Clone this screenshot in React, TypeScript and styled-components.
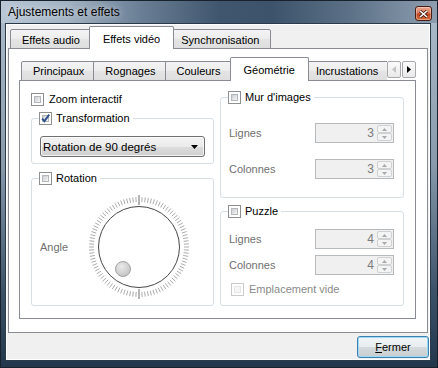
import styled, { createGlobalStyle } from 'styled-components';

const GlobalStyle = createGlobalStyle`
  html, body { margin: 0; padding: 0; }
  body {
    font-family: "Liberation Sans", Arial, sans-serif;
    font-size: 11px;
    color: #000;
    background: #fff;
  }
  *, *::before, *::after { box-sizing: border-box; }
`;

const Window = styled.div`
  width: 438px;
  height: 368px;
  display: flex;
  flex-direction: column;
  border: 1px solid #17222d;
  background: linear-gradient(to bottom, #aebdcc 0%, #8799ab 45%, #3b5168 80%, #22374c 100%);
`;

const TitleBar = styled.div`
  height: 22px;
  flex: none;
  display: flex;
  align-items: flex-start;
  justify-content: space-between;
  padding: 0 5px 0 7px;
  background: linear-gradient(
    to right,
    #b9c7d5 0%,
    #a3b3c3 15%,
    #6a7f95 32%,
    #40566e 50%,
    #3c536b 62%,
    #5c7187 80%,
    #8e9eb0 100%
  );
`;

const Title = styled.span`
  font-size: 12px;
  line-height: 23px;
  text-shadow: 0 0 6px rgba(255, 255, 255, 0.8);
`;

const CloseButton = styled.div`
  width: 17px;
  height: 15px;
  margin-top: 5px;
  display: flex;
  align-items: center;
  justify-content: center;
  border: 1px solid #4a1d12;
  border-radius: 3px;
  background: linear-gradient(#eaa891 0%, #da7a5c 45%, #c4421f 55%, #d2703f 100%);
  box-shadow: inset 0 0 0 1px rgba(255, 255, 255, 0.35);
`;

const Client = styled.div`
  flex: 1;
  min-height: 0;
  margin: 0 6px 6px 4px;
  display: flex;
  flex-direction: column;
  padding: 2px 2px 2px 2px;
  border: 1px solid #2b3a48;
  background: #f0f0f0;
  box-shadow: inset 0 0 0 1px #fff;
`;

const TabWidget = styled.div`
  flex: 1;
  min-height: 0;
  display: flex;
  flex-direction: column;
`;

const Tab = styled.div<{ $active?: boolean }>`
  flex: none;
  display: flex;
  align-items: center;
  white-space: nowrap;
  height: ${(p) => (p.$active ? '100%' : '20px')};
  padding: 0 ${(p) => (p.$active ? 13 : 11)}px;
  border: 1px solid #898c95;
  border-bottom: ${(p) => (p.$active ? 'none' : '1px solid #898c95')};
  border-radius: 2px 2px 0 0;
  background: ${(p) =>
    p.$active ? '#fff' : 'linear-gradient(#f4f4f4 0%, #ececec 50%, #e4e4e4 51%, #dedede 100%)'};
  position: relative;
  z-index: ${(p) => (p.$active ? 1 : 0)};

  & + & {
    margin-left: ${(p) => (p.$active ? -3 : -1)}px;
  }
  ${(p) => p.$active && 'margin-right: -2px;'}
`;

const OuterBar = styled.div`
  height: 23px;
  flex: none;
  margin-bottom: -1px;
  position: relative;
  z-index: 2;
  display: flex;
  align-items: flex-end;
  padding-left: 2px;

  ${Tab} {
    padding-top: 2px;
  }
`;

const OuterPane = styled.div`
  flex: 1;
  min-height: 0;
  display: flex;
  flex-direction: column;
  padding: 8px 11px 13px 10px;
  border: 1px solid #898c95;
  background: #fff;
`;

const InnerBar = styled.div`
  height: 24px;
  flex: none;
  margin-bottom: -1px;
  position: relative;
  z-index: 2;
  display: flex;
`;

const TabStrip = styled.div`
  flex: 1;
  min-width: 0;
  overflow: hidden;
  display: flex;
  align-items: flex-end;
  padding-left: 2px;
`;

const Scrollers = styled.div`
  display: flex;
  gap: 1px;
  align-self: flex-start;
  margin-top: 4px;
`;

const ScrollButton = styled.div`
  width: 14px;
  height: 17px;
  display: flex;
  align-items: center;
  justify-content: center;
  border: 1px solid #a7a9ad;
  border-radius: 2px;
  background: linear-gradient(#fbfbfb, #e9e9e9);
`;

const InnerPane = styled.div`
  flex: 1;
  min-height: 0;
  display: grid;
  grid-template-columns: 183px 184px;
  column-gap: 6px;
  padding: 10px 11px 12px 11px;
  border: 1px solid #898c95;
  background: #fff;
`;

const Column = styled.div`
  display: flex;
  flex-direction: column;
`;

const CheckRow = styled.div<{ $indent?: number; $muted?: boolean }>`
  display: flex;
  align-items: center;
  gap: 5px;
  height: 13px;
  line-height: 13px;
  margin-left: ${(p) => p.$indent ?? 0}px;
  color: ${(p) => (p.$muted ? '#8a8a8a' : '#000')};
`;

const Box = styled.span<{ $disabled?: boolean }>`
  position: relative;
  flex: none;
  width: 13px;
  height: 13px;
  border: 1px solid ${(p) => (p.$disabled ? '#cbcbcb' : '#8e8f8f')};
  background: #fff;

  &::before {
    content: '';
    position: absolute;
    inset: 2px;
    border: 1px solid ${(p) => (p.$disabled ? '#e6e6e6' : '#b3b6ba')};
    background: ${(p) =>
      p.$disabled ? '#f6f6f6' : 'linear-gradient(135deg, #cbced2 0%, #e4e5e7 60%, #f7f7f7 100%)'};
  }

  svg {
    position: absolute;
    left: 0;
    top: 0;
  }
`;

const Group = styled.fieldset<{ $grow?: boolean; $gap?: number }>`
  margin: ${(p) => p.$gap ?? 0}px 0 0;
  min-width: 0;
  padding: 0 9px 0 8px;
  border: 1px solid #d5dfe5;
  border-radius: 3px;
  display: flex;
  flex-direction: column;
  ${(p) => p.$grow && 'flex: 1;'}
`;

const Legend = styled.legend`
  display: flex;
  align-items: center;
  gap: 4px;
  height: 13px;
  line-height: 13px;
  margin-left: -1px;
  padding: 0 3px 0 0;
`;

const GroupBody = styled.div<{ $top: number; $bottom: number; $gap?: number }>`
  display: flex;
  flex-direction: column;
  gap: ${(p) => p.$gap ?? 0}px;
  padding: ${(p) => p.$top}px 0 ${(p) => p.$bottom}px;
`;

const Combo = styled.div`
  height: 21px;
  display: flex;
  align-items: center;
  justify-content: space-between;
  padding: 0 6px 0 2px;
  margin-right: -1px;
  border: 1px solid #707070;
  border-radius: 3px;
  background: linear-gradient(#f3f3f3 0%, #ebebeb 50%, #dddddd 51%, #cfcfcf 100%);
  box-shadow: inset 0 0 0 1px rgba(255, 255, 255, 0.75);
  font-size: 11.5px;
`;

const DialBody = styled.div`
  flex: 1;
  display: flex;
  align-items: center;
  padding-top: 3px;
`;

const FieldLabel = styled.span`
  color: #6f6f6f;
`;

const DialSvg = styled.svg`
  margin-left: 18px;
  flex: none;
`;

const FieldRow = styled.div`
  height: 20px;
  display: flex;
  align-items: center;
  justify-content: space-between;
`;

const Spin = styled.div`
  width: 79px;
  height: 20px;
  display: flex;
  border: 1px solid #b7babd;
  background: #f0f0f0;
`;

const SpinValue = styled.span`
  flex: 1;
  align-self: center;
  text-align: right;
  padding-right: 3px;
  color: #7a7a7a;
  font-size: 12px;
`;

const SpinButtons = styled.div`
  width: 16px;
  display: flex;
  flex-direction: column;
  padding: 1px 1px 1px 0;
`;

const SpinButton = styled.div`
  flex: 1;
  display: flex;
  align-items: center;
  justify-content: center;
  border: 1px solid #cfd1d3;
  border-radius: 2px;
  background: #f4f4f4;
`;

const ButtonRow = styled.div`
  flex: none;
  display: flex;
  justify-content: flex-end;
  margin: 3px -1px 0 0;
`;

const PushButton = styled.button`
  width: 72px;
  height: 22px;
  padding: 0;
  font: inherit;
  color: #000;
  border: 1px solid #3c7fb1;
  border-radius: 3px;
  background: linear-gradient(#f1f5f7 0%, #e7edf0 50%, #d5dadd 51%, #c8cdd0 100%);
  box-shadow: inset 0 0 0 1px #9ddaf6;

  u {
    text-decoration: underline;
  }
`;

const CheckBox = ({ checked, disabled }: { checked?: boolean; disabled?: boolean }) => (
  <Box $disabled={disabled}>
    {checked && (
      <svg width="11" height="11" viewBox="0 0 11 11">
        <path d="M2.2 5.6 L4.4 8.2 L9.2 1.6" fill="none" stroke="#2c4c8c" strokeWidth="1.9" />
      </svg>
    )}
  </Box>
);

const SpinBox = ({ value }: { value: number }) => (
  <Spin>
    <SpinValue>{value}</SpinValue>
    <SpinButtons>
      <SpinButton>
        <svg width="5" height="3" viewBox="0 0 5 3">
          <path d="M0 3 L2.5 0 L5 3 Z" fill="#a9a9a9" />
        </svg>
      </SpinButton>
      <SpinButton>
        <svg width="5" height="3" viewBox="0 0 5 3">
          <path d="M0 0 L2.5 3 L5 0 Z" fill="#a9a9a9" />
        </svg>
      </SpinButton>
    </SpinButtons>
  </Spin>
);

const Dial = () => {
  const size = 106;
  const c = size / 2;
  const n = 100;
  const ticks = [];
  for (let i = 0; i < n; i++) {
    const a = (i / n) * Math.PI * 2;
    const major = i % (n / 2) === 0;
    const r1 = major ? 42 : 45;
    const r2 = major ? 52 : 50;
    const s = Math.sin(a);
    const k = Math.cos(a);
    ticks.push(
      <line
        key={i}
        x1={c + s * r1}
        y1={c - k * r1}
        x2={c + s * r2}
        y2={c - k * r2}
        stroke={major ? '#6a6a6a' : '#a2a2a2'}
        strokeWidth={major ? 1 : 0.9}
      />
    );
  }
  return (
    <DialSvg width={size} height={size} viewBox={`0 0 ${size} ${size}`}>
      <defs>
        <radialGradient id="knob" cx="40%" cy="35%" r="70%">
          <stop offset="0%" stopColor="#eaeaea" />
          <stop offset="100%" stopColor="#c2c2c2" />
        </radialGradient>
      </defs>
      {ticks}
      <circle cx={c} cy={c} r={40.5} fill="#fff" stroke="#474747" strokeWidth="1" />
      <circle cx={c - 16} cy={c + 22} r={7.5} fill="url(#knob)" stroke="#a3a3a3" strokeWidth="1" />
    </DialSvg>
  );
};

const App = () => (
  <>
    <GlobalStyle />
    <Window>
      <TitleBar>
        <Title>Ajustements et effets</Title>
        <CloseButton>
          <svg width="9" height="8" viewBox="0 0 9 8">
            <path d="M1 1 L8 7 M8 1 L1 7" stroke="#3b160d" strokeWidth="3" />
            <path d="M1 1 L8 7 M8 1 L1 7" stroke="#fff" strokeWidth="1.6" />
          </svg>
        </CloseButton>
      </TitleBar>
      <Client>
        <TabWidget>
          <OuterBar>
            <Tab>Effets audio</Tab>
            <Tab $active>Effets vidéo</Tab>
            <Tab>Synchronisation</Tab>
          </OuterBar>
          <OuterPane>
            <TabWidget>
              <InnerBar>
                <TabStrip>
                  <Tab>Principaux</Tab>
                  <Tab>Rognages</Tab>
                  <Tab>Couleurs</Tab>
                  <Tab $active>Géométrie</Tab>
                  <Tab>Incrustations</Tab>
                </TabStrip>
                <Scrollers>
                  <ScrollButton>
                    <svg width="4" height="7" viewBox="0 0 4 7">
                      <path d="M4 0 L0 3.5 L4 7 Z" fill="#c4c4c4" />
                    </svg>
                  </ScrollButton>
                  <ScrollButton>
                    <svg width="4" height="7" viewBox="0 0 4 7">
                      <path d="M0 0 L4 3.5 L0 7 Z" fill="#000" />
                    </svg>
                  </ScrollButton>
                </Scrollers>
              </InnerBar>
              <InnerPane>
                <Column>
                  <CheckRow style={{ marginTop: 2 }}>
                    <CheckBox />
                    Zoom interactif
                  </CheckRow>
                  <Group $gap={6}>
                    <Legend>
                      <CheckBox checked />
                      Transformation
                    </Legend>
                    <GroupBody $top={11} $bottom={6}>
                      <Combo>
                        Rotation de 90 degrés
                        <svg width="7" height="4" viewBox="0 0 7 4">
                          <path d="M0 0 L7 0 L3.5 4 Z" fill="#000" />
                        </svg>
                      </Combo>
                    </GroupBody>
                  </Group>
                  <Group $gap={8} $grow>
                    <Legend>
                      <CheckBox />
                      Rotation
                    </Legend>
                    <DialBody>
                      <FieldLabel>Angle</FieldLabel>
                      <Dial />
                    </DialBody>
                  </Group>
                </Column>
                <Column>
                  <Group>
                    <Legend>
                      <CheckBox />
                      Mur d'images
                    </Legend>
                    <GroupBody $top={19} $bottom={18} $gap={16}>
                      <FieldRow>
                        <FieldLabel>Lignes</FieldLabel>
                        <SpinBox value={3} />
                      </FieldRow>
                      <FieldRow>
                        <FieldLabel>Colonnes</FieldLabel>
                        <SpinBox value={3} />
                      </FieldRow>
                    </GroupBody>
                  </Group>
                  <Group $gap={7} $grow>
                    <Legend>
                      <CheckBox />
                      Puzzle
                    </Legend>
                    <GroupBody $top={11} $bottom={9}>
                      <FieldRow>
                        <FieldLabel>Lignes</FieldLabel>
                        <SpinBox value={4} />
                      </FieldRow>
                      <FieldRow style={{ marginTop: 6 }}>
                        <FieldLabel>Colonnes</FieldLabel>
                        <SpinBox value={4} />
                      </FieldRow>
                      <CheckRow $indent={2} $muted style={{ marginTop: 8 }}>
                        <CheckBox disabled />
                        Emplacement vide
                      </CheckRow>
                    </GroupBody>
                  </Group>
                </Column>
              </InnerPane>
            </TabWidget>
          </OuterPane>
        </TabWidget>
        <ButtonRow>
          <PushButton>
            <u>F</u>ermer
          </PushButton>
        </ButtonRow>
      </Client>
    </Window>
  </>
);

export default App;
